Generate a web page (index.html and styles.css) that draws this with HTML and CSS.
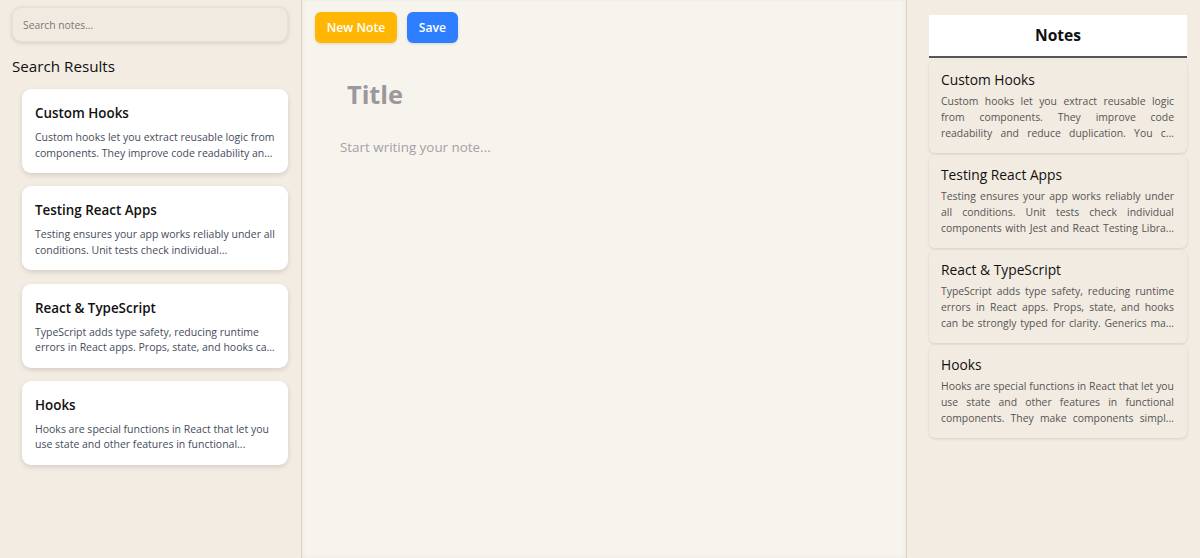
FILE: index.html
```html
<!DOCTYPE html>
<html>
<head>
<meta charset="utf-8">
<link rel="stylesheet" href="styles.css">
</head>
<body>
<div class="app">
  <aside class="sidebar">
    <input class="search" type="text" placeholder="Search notes...">
    <h2 class="results-title">Search Results</h2>
    <div class="results">
      <div class="card">
        <h3 class="card-title">Custom Hooks</h3>
        <p class="card-text">Custom hooks let you extract reusable logic from<br>components. They improve code readability an...</p>
      </div>
      <div class="card">
        <h3 class="card-title">Testing React Apps</h3>
        <p class="card-text">Testing ensures your app works reliably under all<br>conditions. Unit tests check individual...</p>
      </div>
      <div class="card">
        <h3 class="card-title">React &amp; TypeScript</h3>
        <p class="card-text">TypeScript adds type safety, reducing runtime<br>errors in React apps. Props, state, and hooks ca...</p>
      </div>
      <div class="card">
        <h3 class="card-title">Hooks</h3>
        <p class="card-text">Hooks are special functions in React that let you<br>use state and other features in functional...</p>
      </div>
    </div>
  </aside>
  <main class="editor">
    <div class="toolbar">
      <button class="btn btn-new">New Note</button>
      <button class="btn btn-save">Save</button>
    </div>
    <input class="title-input" type="text" placeholder="Title">
    <textarea class="body-input" placeholder="Start writing your note..."></textarea>
  </main>
  <aside class="notes">
    <div class="notes-header">Notes</div>
    <div class="note">
      <h3 class="note-title">Custom Hooks</h3>
      <p class="note-text">Custom hooks let you extract reusable logic<br>from components. They improve code<br>readability and reduce duplication. You c...</p>
    </div>
    <div class="note">
      <h3 class="note-title">Testing React Apps</h3>
      <p class="note-text">Testing ensures your app works reliably under<br>all conditions. Unit tests check individual<br>components with Jest and React Testing Libra...</p>
    </div>
    <div class="note">
      <h3 class="note-title">React &amp; TypeScript</h3>
      <p class="note-text">TypeScript adds type safety, reducing runtime<br>errors in React apps. Props, state, and hooks<br>can be strongly typed for clarity. Generics ma...</p>
    </div>
    <div class="note">
      <h3 class="note-title">Hooks</h3>
      <p class="note-text">Hooks are special functions in React that let you<br>use state and other features in functional<br>components. They make components simpl...</p>
    </div>
  </aside>
</div>
</body>
</html>
```
FILE: styles.css
```css
* { box-sizing: border-box; }
html, body { margin: 0; padding: 0; height: 100%; }
body {
  font-family: "Open Sans", "Noto Sans", sans-serif;
  background: #f3ece3;
  color: #111;
}
.app {
  display: flex;
  height: 558px;
}
.sidebar {
  width: 302px;
  flex: none;
  padding: 7px 13px 0 12px;
  background: #f3ece3;
  border-right: 1px solid #d9d3cb;
}
.search {
  display: block;
  width: 276px;
  height: 35px;
  border: 1px solid #e6e0d7;
  border-radius: 9px;
  background: #f1eae0;
  box-shadow: 0 1px 4px rgba(0,0,0,0.15);
  padding: 0 10px;
  font-family: inherit;
  font-size: 10.3px;
  color: #333;
  outline: none;
}
.search::placeholder { color: #777; }
.results-title {
  margin: 13px 0 12px;
  font-size: 15.2px;
  font-weight: 500;
  line-height: 22px;
  color: #111;
}
.results {
  display: flex;
  flex-direction: column;
  gap: 13.3px;
  padding-left: 10px;
}
.card {
  background: #fff;
  border-radius: 9px;
  padding: 14px 8px 12px 13px;
  box-shadow: 0 2px 5px rgba(0,0,0,0.13);
  height: 84px;
}
.card-title {
  margin: 0 0 7px;
  font-size: 13.4px;
  font-weight: 600;
  line-height: 20px;
  color: #111;
}
.card-text {
  margin: 0;
  font-size: 10.5px;
  line-height: 15.5px;
  color: #454c5c;
  white-space: nowrap;
}
.editor {
  flex: 1;
  background: #f7f3ed;
  padding: 12px 13px;
  display: flex;
  flex-direction: column;
  border-right: 1px solid #d9d3cb;
  box-shadow: inset 2px 0 3px rgba(0,0,0,0.03), inset -2px 0 3px rgba(0,0,0,0.03);
}
.toolbar { display: flex; gap: 10px; }
.btn {
  height: 31px;
  border: none;
  border-radius: 6px;
  color: #fff;
  font-family: inherit;
  font-size: 12.2px;
  font-weight: 600;
  padding: 0;
  white-space: nowrap;
  box-shadow: 0 1px 3px rgba(0,0,0,0.12);
}
.btn-new { background: #ffb703; width: 82px; }
.btn-save { background: #2d7fff; width: 51px; }
.title-input {
  margin: 30px 0 0 0;
  border: none;
  background: transparent;
  font-family: inherit;
  font-size: 25.3px;
  font-weight: 700;
  padding: 0 0 0 32px;
  height: 42px;
  outline: none;
  color: #222;
}
.title-input::placeholder { color: #9c979d; }
.body-input {
  margin-top: 23px;
  border: none;
  background: transparent;
  resize: none;
  font-family: inherit;
  font-size: 13.4px;
  padding: 0 0 0 25px;
  outline: none;
  flex: 1;
}
.body-input::placeholder { color: #a5a1a6; }
.notes {
  width: 293px;
  flex: none;
  background: #f3ece3;
  padding: 15px 13px 0 22px;
}
.notes-header {
  background: #fff;
  height: 43px;
  border-bottom: 2px solid #555;
  text-align: center;
  font-size: 15.6px;
  font-weight: 700;
  line-height: 41px;
  color: #111;
}
.note {
  margin-top: 2px;
  background: #f2ebe1;
  border-radius: 6px;
  box-shadow: 0 1px 3px rgba(0,0,0,0.12);
  padding: 10px 13px 10px 12px;
  height: 93px;
}
.note:first-of-type { margin-top: 0; }
.note-title {
  margin: 0 0 3px;
  font-size: 13.8px;
  font-weight: 500;
  line-height: 20px;
  color: #111;
}
.note-text {
  margin: 0;
  font-size: 10.4px;
  line-height: 16px;
  color: #555;
  text-align: justify;
  text-align-last: justify;
}
```
